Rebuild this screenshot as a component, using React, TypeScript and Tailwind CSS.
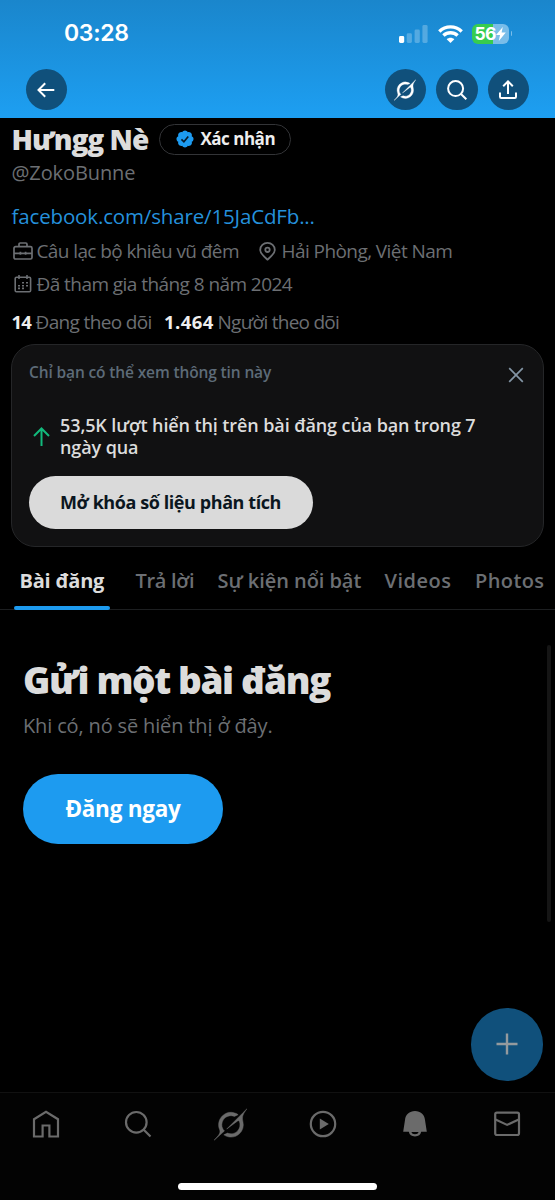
import type { ReactNode } from "react";

function GrokIcon({ className }: { className: string }) {
  return (
    <svg viewBox="0 0 24 24" fill="currentColor" stroke="currentColor" strokeWidth="0.35" className={className}>
      <path d="M9.27 15.29l7.978-5.897c.391-.29.95-.177 1.137.272.98 2.369.542 5.215-1.41 7.169-1.951 1.954-4.667 2.382-7.149 1.406l-2.711 1.257c3.889 2.661 8.611 2.003 11.562-.953 2.341-2.344 3.066-5.539 2.388-8.42l.006.007c-.983-4.232.242-5.924 2.75-9.383.06-.082.12-.164.179-.248l-3.301 3.305v-.01L9.267 15.292M7.623 16.723c-2.792-2.67-2.31-6.801.071-9.184 1.761-1.763 4.647-2.483 7.166-1.425l2.705-1.25a7.808 7.808 0 00-1.829-1A8.975 8.975 0 005.984 5.83c-2.533 2.536-3.33 6.436-1.962 9.764 1.022 2.487-.653 4.246-2.34 6.022-.599.63-1.199 1.259-1.682 1.925l7.62-6.815" />
    </svg>
  );
}

function RoundButton({ children }: { children: ReactNode }) {
  return (
    <button className="flex size-[41.5px] items-center justify-center rounded-full bg-[#10507b] text-white">
      {children}
    </button>
  );
}

function StatusBar() {
  return (
    <div className="flex h-[67px] items-center justify-between pl-16 pr-[43px]">
      <span className="font-['Inter',sans-serif] text-[23px] font-semibold tracking-[-0.3px]">03:28</span>
      <div className="flex items-center">
        <svg width="29" height="18" viewBox="0 0 29 18" fill="#fff">
          <rect x="0" y="11" width="5.2" height="7" rx="1.4" />
          <rect x="7.7" y="8.3" width="5.2" height="9.7" rx="1.4" opacity=".25" />
          <rect x="15.6" y="4.5" width="5.2" height="13.5" rx="1.4" opacity=".25" />
          <rect x="23.4" y="0" width="5.2" height="18" rx="1.4" opacity=".25" />
        </svg>
        <svg width="25" height="18" viewBox="0 0 25 18" className="ml-[9.5px]" fill="none" stroke="#fff" strokeWidth="3.4">
          <path d="M1.3 6.4C7.7.3 17.3.3 23.7 6.4" />
          <path d="M5.4 10.6c4.1-3.8 10.1-3.8 14.2 0" />
          <path d="M8.7 14.2c2.3-2 5.3-2 7.6 0L12.5 18z" fill="#fff" stroke="none" />
        </svg>
        <div className="ml-[9px] flex h-5 w-[37px] items-center rounded-[6px] bg-[linear-gradient(90deg,#37cc4f_58%,#79bde9_58%)] pl-[3px]">
          <span className="font-['Inter',sans-serif] text-[17.5px] font-bold leading-5 tracking-[-0.6px]">56</span>
          <svg width="10" height="14" viewBox="0 0 10 14" fill="#fff">
            <path d="M6.8 0 0 8h4L2.8 14 9.8 5.6H5.6z" />
          </svg>
        </div>
        <div className="ml-0.5 h-[5px] w-[1.5px] rounded-r bg-[#79bde9]" />
      </div>
    </div>
  );
}

function Header() {
  return (
    <header className="h-[118px] shrink-0 bg-linear-to-b from-[#1a86cc] to-[#1d9ff2]">
      <StatusBar />
      <div className="flex h-[45px] items-center justify-between pl-[25.5px] pr-[26px]">
        <RoundButton>
          <svg width="18" height="16" viewBox="0 0 18 16" fill="none" stroke="currentColor" strokeWidth="2">
            <path d="M17.3 8H1.7M8.2 1.3 1.5 8l6.700 6.700" />
          </svg>
        </RoundButton>
        <div className="flex gap-[10px]">
          <RoundButton>
            <GrokIcon className="size-[22px]" />
          </RoundButton>
          <RoundButton>
            <svg width="20" height="20" viewBox="0 0 20 20" fill="none" stroke="currentColor" strokeWidth="2">
              <circle cx="8.6" cy="8.6" r="7.5" />
              <path d="m14 14 5.3 5.3" />
            </svg>
          </RoundButton>
          <RoundButton>
            <svg width="18" height="19" viewBox="0 0 18 19" fill="none" stroke="currentColor" strokeWidth="2">
              <path d="M9 14V1.700M4.200 6.200 9 1.400l4.800 4.800M1 12.500v4.200c0 .8.5 1.300 1.300 1.300h13.400c.8 0 1.300-.5 1.300-1.300v-4.200" />
            </svg>
          </RoundButton>
        </div>
      </div>
    </header>
  );
}

function Profile() {
  return (
    <section className="flex flex-col px-[11.5px] text-[#6c6f73]">
      <div className="flex h-[42px] items-center whitespace-nowrap">
        <h1 className="w-[147.5px] text-[28px] font-extrabold leading-[42px] tracking-[-1px] text-[#dcdcdc]">Hưngg Nè</h1>
        <button className="flex h-[31px] w-[132px] items-center rounded-full border border-[#333437] pl-[15px] text-[17px] font-bold tracking-[-0.5px] text-[#eee]">
          <svg width="20" height="20" viewBox="0 0 22 22" className="mr-[5.5px]">
            <path fill="#1d9bf0" d="M20.396 11c-.018-.646-.215-1.275-.57-1.816-.354-.54-.852-.972-1.438-1.246.223-.607.27-1.264.14-1.897-.131-.634-.437-1.218-.882-1.687-.47-.445-1.053-.75-1.687-.882-.633-.13-1.29-.083-1.897.14-.273-.587-.704-1.086-1.245-1.44S11.647 1.62 11 1.604c-.646.017-1.273.213-1.813.568s-.969.854-1.24 1.44c-.608-.223-1.267-.272-1.902-.14-.635.13-1.22.436-1.69.882-.445.47-.749 1.055-.878 1.688-.13.633-.08 1.29.144 1.896-.587.274-1.087.705-1.443 1.245-.356.54-.555 1.17-.574 1.817.02.647.218 1.276.574 1.817.356.54.856.972 1.443 1.245-.224.606-.274 1.263-.144 1.896.13.634.433 1.218.877 1.688.47.443 1.054.747 1.687.878.633.132 1.29.084 1.897-.136.274.586.705 1.084 1.246 1.439.54.354 1.17.551 1.816.569.647-.016 1.276-.213 1.817-.567s.972-.854 1.245-1.44c.604.239 1.266.296 1.903.164.636-.132 1.22-.447 1.68-.907.46-.46.776-1.044.908-1.681s.075-1.299-.165-1.903c.586-.274 1.084-.705 1.439-1.246.354-.54.551-1.17.569-1.816z" />
            <path fill="none" stroke="#071a29" strokeWidth="1.8" d="m7.1 11.4 2.7 2.7 4.8-5.8" />
          </svg>
          Xác nhận
        </button>
      </div>
      <div className="h-[25px] text-[20px] leading-[25px] tracking-[-0.1px]">@ZokoBunne</div>
      <a className="mt-[19px] h-[25px] text-[20.5px] leading-6 tracking-[-0.15px] text-[#2591dc]">facebook.com/share/15JaCdFb...</a>
      <div className="mt-[10px] flex h-6 items-center whitespace-nowrap text-[19px] leading-6">
        <svg width="20" height="18" viewBox="0 0 20 18" className="ml-px mr-1" fill="none" stroke="currentColor" strokeWidth="1.7">
          <rect x="1" y="4.6" width="18" height="12.4" rx="1.6" />
          <path d="M6 4.600V2.200C6 1.500 6.500 1 7.200 1h5.600c.7 0 1.200.5 1.200 1.200v2.400M1 11.300h18M7.400 9.800v3M12.600 9.800v3" />
        </svg>
        <span className="w-[222px] tracking-[-0.6px]">Câu lạc bộ khiêu vũ đêm</span>
        <svg width="17" height="19" viewBox="0 0 17 19" className="mr-1.5" fill="none" stroke="currentColor" strokeWidth="1.8">
          <path d="M8.5 17.6C5.200 14.700 1.200 11.500 1.200 7.900a7.300 7 0 0 1 14.600 0c0 3.600-4 6.800-7.300 9.700z" />
          <circle cx="8.500" cy="7.800" r="2.200" />
        </svg>
        <span className="tracking-[-0.570px]">Hải Phòng, Việt Nam</span>
      </div>
      <div className="mt-[9px] flex h-6 items-center whitespace-nowrap text-[19px] leading-6 tracking-[-0.560px]">
        <svg width="18" height="18" viewBox="0 0 18 18" className="ml-[2px] mr-[5px]" fill="none" stroke="currentColor" strokeWidth="1.6">
          <rect x="1.200" y="2.300" width="15.400" height="14.500" rx="1.300" />
          <path d="M5 0v4M13 0v4" />
          <path strokeDasharray="2 2" d="M8 7.800h6M4 10.700h10M4 13.400h6" />
        </svg>
        Đã tham gia tháng 8 năm 2024
      </div>
      <div className="mt-[14px] flex h-6 items-center whitespace-nowrap text-[19px] leading-6">
        <b className="w-[24px] text-[18.500px] tracking-[-0.800px] text-[#eee]">14</b>
        <span className="w-[128.500px] tracking-[-0.640px]">Đang theo dõi</span>
        <b className="w-[53.500px] text-[18.500px] tracking-[0.450px] text-[#eee]">1.464</b>
        <span className="tracking-[-0.730px]">Người theo dõi</span>
      </div>
    </section>
  );
}

function AnalyticsCard() {
  return (
    <section className="mx-[11px] mt-[9.500px] h-[203.500px] shrink-0 rounded-[24px] border border-[#252628] bg-[#111112] px-[17px]">
      <div className="flex h-[57px] items-center justify-between">
        <span className="text-[15.500px] font-semibold tracking-[-0.130px] text-[#5d6b78]">Chỉ bạn có thể xem thông tin này</span>
        <svg width="16" height="16" viewBox="0 0 16 16" className="mr-[2px] mt-[4px]" fill="none" stroke="#8395a5" strokeWidth="1.700">
          <path d="m1.200 1.200 13.600 13.600M14.800 1.200 1.200 14.800" />
        </svg>
      </div>
      <div className="mt-[12px] flex h-[44px] items-center">
        <svg width="17" height="19" viewBox="0 0 17 19" className="ml-1 mt-0.5 shrink-0" fill="none" stroke="#12ba7c" strokeWidth="2">
          <path d="M8.500 19V1.600M1 9l7.500-7.500L16 9" />
        </svg>
        <p className="ml-2.5 whitespace-nowrap text-[18px] font-semibold leading-[22px] tracking-[-0.100px] text-[#dcdcdc]">
          53,5K lượt hiển thị trên bài đăng của bạn trong 7<br />ngày qua
        </p>
      </div>
      <button className="-ml-[0.500px] mt-[18.500px] flex h-[53px] w-[284px] items-center justify-center rounded-full bg-[#dadada] text-[18px] font-bold tracking-[-0.420px] text-[#0b1620]">
        Mở khóa số liệu phân tích
      </button>
    </section>
  );
}

function Tabs() {
  return (
    <nav className="flex h-[62.500px] shrink-0 border-b border-[#1d1f21] pl-[14px] text-[20px] font-semibold leading-[68px] text-[#6c6f73]">
      <div className="relative w-[95.500px] whitespace-nowrap pl-[5.500px] font-bold tracking-[-0.200px] text-[#dcdcdc]">
        Bài đăng
        <div className="absolute bottom-[-1px] left-0 h-1 w-full rounded-full bg-[#1d9bf0]" />
      </div>
      <span className="ml-[26px] w-[82px] whitespace-nowrap tracking-[-0.300px]">Trả lời</span>
      <span className="w-[167px] whitespace-nowrap tracking-[-0.050px]">Sự kiện nổi bật</span>
      <span className="w-[90.500px] tracking-[0.500px]">Videos</span>
      <span className="tracking-[0.400px]">Photos</span>
    </nav>
  );
}

function EmptyState() {
  return (
    <main className="relative grow px-[23px] pt-[48px]">
      <h2 className="whitespace-nowrap text-[37px] font-extrabold leading-[44px] tracking-[-1.400px] text-[#dcdcdc]">Gửi một bài đăng</h2>
      <p className="mt-[10px] text-[20px] leading-7 tracking-[-0.150px] text-[#6c6f73]">Khi có, nó sẽ hiển thị ở đây.</p>
      <button className="mt-[34.500px] flex h-[70px] w-[200px] items-center justify-center rounded-full bg-[#1d9bf0] text-[22.500px] font-bold tracking-[-0.250px] text-white">
        Đăng ngay
      </button>
      <div className="absolute right-1 top-[35px] h-[277px] w-1 rounded-full bg-[#151515]" />
      <button className="absolute bottom-[11.500px] right-[12px] flex size-[72.500px] items-center justify-center rounded-full bg-[#10507b]">
        <svg width="22" height="22" viewBox="0 0 22 22" stroke="#949a9e" strokeWidth="2.400">
          <path d="M11 .5v21M.5 11h21" />
        </svg>
      </button>
    </main>
  );
}

function BottomBar() {
  return (
    <footer className="h-[108px] shrink-0 border-t border-[#111] bg-[#030303]">
      <div className="flex h-[62px] items-center justify-between pl-[32px] pr-[34px] text-[#6b6b6b]">
        <svg width="28" height="28" viewBox="0 0 28 28" fill="none" stroke="currentColor" strokeWidth="2.200">
          <path d="M2 9.200 14 1.800l12 7.400V26.500h-8.600v-11h-6.800v11H2z" />
        </svg>
        <svg width="28" height="28" viewBox="0 0 28 28" fill="none" stroke="currentColor" strokeWidth="2.200">
          <circle cx="12.300" cy="12.300" r="10.300" />
          <path d="m19.500 19.500 7 7" />
        </svg>
        <GrokIcon className="-mx-[2.500px] size-[33px]" />
        <svg width="28" height="28" viewBox="0 0 28 28" fill="none" stroke="currentColor" strokeWidth="2.200">
          <circle cx="14" cy="14" r="12.200" />
          <path d="m10.800 8.500 9 5.500-9 5.500z" fill="currentColor" stroke="none" />
        </svg>
        <svg width="28" height="28" viewBox="0 0 28 28" fill="currentColor">
          <path d="M14 1C8.500 1 4.400 4.700 4 10L2.200 21.800h5.600a6.300 5.600 0 0 0 12.400 0h5.600L24 10C23.600 4.700 19.500 1 14 1z" />
          <path fill="#030303" d="M10.300 22h7.400a3.800 3 0 0 1-7.400 0z" />
        </svg>
        <svg width="28" height="28" viewBox="0 0 28 28" fill="none" stroke="currentColor" strokeWidth="2.200">
          <rect x="2.200" y="2.700" width="23.800" height="22.300" rx="1.700" />
          <path d="m2.500 9.600 11.600 5.300 11.600-5.300" />
        </svg>
      </div>
      <div className="mx-auto mt-[28px] h-[7px] w-[199px] rounded-full bg-white" />
    </footer>
  );
}

export default function App() {
  return (
    <div className="flex h-[1200px] w-full flex-col overflow-hidden bg-black font-['Open_Sans',sans-serif] text-white">
      <Header />
      <Profile />
      <AnalyticsCard />
      <Tabs />
      <EmptyState />
      <BottomBar />
    </div>
  );
}
